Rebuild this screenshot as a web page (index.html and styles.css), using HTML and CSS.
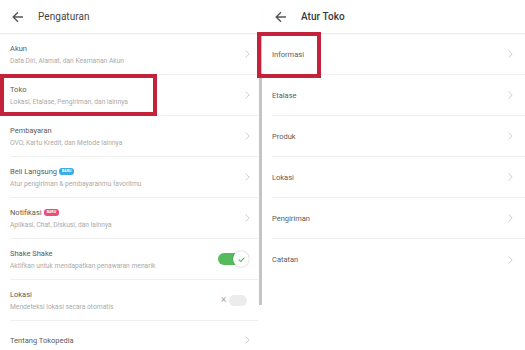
FILE: index.html
```html
<!DOCTYPE html>
<html>
<head>
<meta charset="utf-8">
<link rel="stylesheet" href="styles.css">
</head>
<body>
<div class="screen">
  <section class="panel left">
    <header class="hdr">
      <svg class="back" viewBox="0 0 12 12" width="12" height="12"><path d="M11 6H1.5M6 1.2L1.2 6L6 10.8" fill="none" stroke="#555" stroke-width="1.4"/></svg>
      <span class="hdr-title">Pengaturan</span>
    </header>
    <div class="list">
      <div class="row"><div class="txt"><div class="t">Akun</div><div class="s">Data Diri, Alamat, dan Keamanan Akun</div></div><svg class="chev" viewBox="0 0 5 8" width="5" height="8"><path d="M0.6 0.5L4.2 4L0.6 7.5" fill="none" stroke="#c8c8c8" stroke-width="0.9"/></svg></div>
      <div class="row"><div class="txt"><div class="t">Toko</div><div class="s">Lokasi, Etalase, Pengiriman, dan lainnya</div></div><svg class="chev" viewBox="0 0 5 8" width="5" height="8"><path d="M0.6 0.5L4.2 4L0.6 7.5" fill="none" stroke="#c8c8c8" stroke-width="0.9"/></svg></div>
      <div class="row"><div class="txt"><div class="t">Pembayaran</div><div class="s">OVO, Kartu Kredit, dan Metode lainnya</div></div><svg class="chev" viewBox="0 0 5 8" width="5" height="8"><path d="M0.6 0.5L4.2 4L0.6 7.5" fill="none" stroke="#c8c8c8" stroke-width="0.9"/></svg></div>
      <div class="row"><div class="txt"><div class="t">Beli Langsung <span class="badge blue">BARU</span></div><div class="s">Atur pengiriman &amp; pembayaranmu favoritmu</div></div><svg class="chev" viewBox="0 0 5 8" width="5" height="8"><path d="M0.6 0.5L4.2 4L0.6 7.5" fill="none" stroke="#c8c8c8" stroke-width="0.9"/></svg></div>
      <div class="row"><div class="txt"><div class="t">Notifikasi <span class="badge pink">BARU</span></div><div class="s">Aplikasi, Chat, Diskusi, dan lainnya</div></div><svg class="chev" viewBox="0 0 5 8" width="5" height="8"><path d="M0.6 0.5L4.2 4L0.6 7.5" fill="none" stroke="#c8c8c8" stroke-width="0.9"/></svg></div>
      <div class="row"><div class="txt"><div class="t">Shake Shake</div><div class="s">Aktifkan untuk mendapatkan penawaran menarik</div></div>
        <div class="toggle on"><span class="knob"><svg viewBox="0 0 10 10" width="9" height="9"><path d="M2 5.2L4.2 7.3L8.2 2.8" fill="none" stroke="#4fb85a" stroke-width="1.2"/></svg></span></div>
      </div>
      <div class="row"><div class="txt"><div class="t">Lokasi</div><div class="s">Mendeteksi lokasi secara otomatis</div></div>
        <div class="toggle off"><span class="x">×</span><span class="knob"></span></div>
      </div>
      <div class="row last"><div class="txt"><div class="t">Tentang Tokopedia</div></div><svg class="chev" viewBox="0 0 5 8" width="5" height="8"><path d="M0.6 0.5L4.2 4L0.6 7.5" fill="none" stroke="#c8c8c8" stroke-width="0.9"/></svg></div>
    </div>
    <div class="scrollbar"></div>
    <div class="mark mark-toko"></div>
  </section>
  <section class="panel right">
    <header class="hdr">
      <svg class="back" viewBox="0 0 12 12" width="12" height="12"><path d="M11 6H1.5M6 1.2L1.2 6L6 10.8" fill="none" stroke="#555" stroke-width="1.4"/></svg>
      <span class="hdr-title bold">Atur Toko</span>
    </header>
    <div class="list">
      <div class="row single"><div class="t">Informasi</div><svg class="chev" viewBox="0 0 5 8" width="5" height="8"><path d="M0.6 0.5L4.2 4L0.6 7.5" fill="none" stroke="#c8c8c8" stroke-width="0.9"/></svg></div>
      <div class="row single"><div class="t">Etalase</div><svg class="chev" viewBox="0 0 5 8" width="5" height="8"><path d="M0.6 0.5L4.2 4L0.6 7.5" fill="none" stroke="#c8c8c8" stroke-width="0.9"/></svg></div>
      <div class="row single"><div class="t">Produk</div><svg class="chev" viewBox="0 0 5 8" width="5" height="8"><path d="M0.6 0.5L4.2 4L0.6 7.5" fill="none" stroke="#c8c8c8" stroke-width="0.9"/></svg></div>
      <div class="row single"><div class="t">Lokasi</div><svg class="chev" viewBox="0 0 5 8" width="5" height="8"><path d="M0.6 0.5L4.2 4L0.6 7.5" fill="none" stroke="#c8c8c8" stroke-width="0.9"/></svg></div>
      <div class="row single"><div class="t">Pengiriman</div><svg class="chev" viewBox="0 0 5 8" width="5" height="8"><path d="M0.6 0.5L4.2 4L0.6 7.5" fill="none" stroke="#c8c8c8" stroke-width="0.9"/></svg></div>
      <div class="row single nob"><div class="t">Catatan</div><svg class="chev" viewBox="0 0 5 8" width="5" height="8"><path d="M0.6 0.5L4.2 4L0.6 7.5" fill="none" stroke="#c8c8c8" stroke-width="0.9"/></svg></div>
    </div>
    <div class="mark mark-info"></div>
  </section>
</div>
</body>
</html>
```
FILE: styles.css
```css
* { box-sizing: border-box; }
html, body { margin: 0; padding: 0; background: #fff; }
body { font-family: Roboto, "Liberation Sans", sans-serif; color: #444; overflow: hidden; }
.screen { display: flex; width: 525px; height: 350px; }
.panel { position: relative; height: 350px; }
.left { width: 262px; }
.right { flex: 1; }
.hdr {
  height: 34px;
  display: flex;
  align-items: center;
  padding-left: 12px;
  gap: 14px;
  border-bottom: 1px solid #ececec;
  box-shadow: 0 1px 1px rgba(0,0,0,0.03);
}
.right .hdr { padding-left: 13px; }
.back { display: block; }
.hdr-title { font-size: 10px; color: #444; letter-spacing: 0.05px; }
.hdr-title.bold { font-weight: 500; color: #3a3a3a; }
.list { display: flex; flex-direction: column; }
.row {
  height: 41px;
  margin-left: 10px;
  padding-right: 12px;
  display: flex;
  align-items: center;
  justify-content: space-between;
  border-bottom: 1px solid #efefef;
}
.left .row { margin-right: 4px; padding-right: 8px; }
.row.last { border-bottom: none; height: 38px; }
.right .row { padding-right: 12px; }
.row.nob { border-bottom: none; }
.txt { display: flex; flex-direction: column; gap: 4px; }
.t { font-size: 7.5px; color: #5c5c5c; display: flex; align-items: center; gap: 2px; }
.s { font-size: 6.7px; color: #ababab; }
.chev { display: block; }
.badge {
  display: inline-block;
  font-size: 3.6px;
  line-height: 7px;
  height: 7px;
  padding: 0 3px;
  border-radius: 3px;
  color: #fff;
  font-weight: 700;
}
.badge.blue { background: #3aaee8; }
.badge.pink { background: #e8507a; }
.toggle { position: relative; width: 31px; height: 16px; margin-right: 1px; }
.toggle.on::before {
  content: "";
  position: absolute;
  left: 0; top: 2px;
  width: 26px; height: 12px;
  border-radius: 6px;
  background: #55bb5e;
}
.toggle.on .knob {
  position: absolute;
  right: 0; top: 0;
  width: 16px; height: 16px;
  border-radius: 50%;
  background: #fff;
  box-shadow: 0 0 1.5px rgba(0,0,0,0.35);
  display: flex; align-items: center; justify-content: center;
}
.toggle.off::before {
  content: "";
  position: absolute;
  left: 11px; top: 3px;
  width: 18px; height: 11px;
  border-radius: 5.5px;
  background: #ececec;
}
.toggle.off .x {
  position: absolute;
  left: 3px; top: 2px;
  font-size: 10px;
  line-height: 11px;
  color: #aaa;
}
.scrollbar {
  position: absolute;
  left: 259px; top: 34px;
  width: 3px; height: 271px;
  background: #c4c4c4;
}
.mark { position: absolute; border: 4px solid #c4213a; }
.mark-toko { left: 0; top: 74px; width: 157px; height: 42px; }
.mark-info { left: -5px; top: 32px; width: 64px; height: 46px; }
```
